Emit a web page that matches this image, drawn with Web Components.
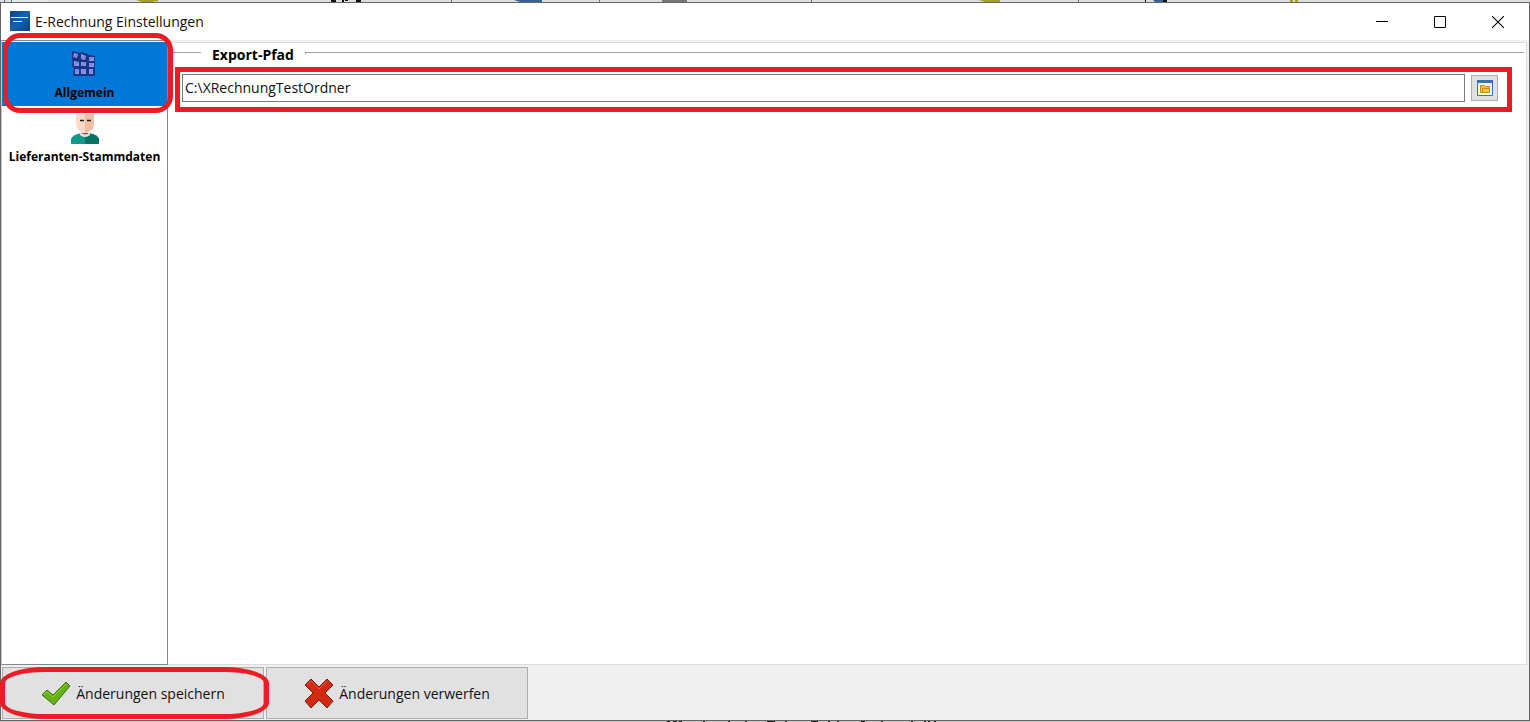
<!DOCTYPE html>
<html lang="de">
<head>
<meta charset="utf-8">
<title>E-Rechnung Einstellungen</title>
<style>
html,body{margin:0;height:100%;overflow:hidden}
body{font-family:"Open Sans","Noto Sans",sans-serif;font-size:14px;color:#111;background:#dedede}
</style>
</head>
<body>
<settings-app></settings-app>
<script>
function define(name, html){
  const t=document.createElement('template');t.innerHTML=html;
  customElements.define(name,class extends HTMLElement{
    constructor(){super();this.attachShadow({mode:'open'}).append(t.content.cloneNode(true));}
  });
}

define('title-bar',`<style>
:host{display:flex;height:37px;flex:none;background:#fff;align-items:center;padding:0 2px 0 8px}
.logo{width:21px;height:21px;flex:none}
h1{font-size:14px;line-height:20px;font-weight:400;margin:0 auto 0 5px;white-space:nowrap}
button{width:58px;height:36px;padding:0;border:0;background:none;display:grid;place-items:center}
</style>
<svg class="logo" viewBox="0 0 21 21"><defs><linearGradient id="g" x2="1" y2="1"><stop stop-color="#0c4184"/><stop offset=".5" stop-color="#1263b0"/><stop offset="1" stop-color="#0c3f82"/></linearGradient></defs><path fill="url(#g)" d="M1 0h20v20H1z"/><path d="M2 6.500h17M4 10.500h9" stroke="#d9ecff"/></svg>
<h1><slot></slot></h1>
<button aria-label="Minimieren"><svg width="12" height="12"><path d="M0 5.500h12" stroke="#000"/></svg></button>
<button aria-label="Maximieren"><svg width="12" height="12"><path d="M.5.5h11v11H.5z" fill="none" stroke="#000"/></svg></button>
<button aria-label="Schließen"><svg width="12" height="12"><path d="M0 0l12 12M12 0L0 12" stroke="#000" stroke-width="1.100"/></svg></button>
`);

define('nav-item',`<style>
:host{display:block;position:relative}
button{font:inherit;font-size:12px;font-weight:700;color:#000;width:100%;height:64px;border:0;padding:5px 0 0;background:#fff;display:flex;flex-direction:column;align-items:center;white-space:nowrap}
:host([active]) button{background:#0078d7}
span{line-height:20px;margin-top:2px}
::slotted(svg){width:32px;height:34px}
:host([active])::after{content:"";position:absolute;left:1px;right:-6px;top:-9px;bottom:-7px;border:5px solid #ed1c24;border-radius:17px;box-sizing:border-box;z-index:3;pointer-events:none}
</style><button><slot name="icon"></slot><span><slot></slot></span></button>`);

define('side-nav',`<style>
:host{display:block;box-sizing:border-box;width:167px;flex:none;background:#fff;border:1px solid #828790;border-left-color:#c4c4c4;padding-top:1px}
nav{display:block}
</style><nav><slot></slot></nav>`);

define('export-path',`<style>
:host{display:block}
.head{display:flex;height:20px;align-items:center}
.head::before{content:"";width:33px;height:1px;background:#a0a0a0;margin:0 11px 5px 0}
.head::after{content:"";flex:1;height:1px;border:1px solid #a0a0a0;border-width:1px 0 0 1px;margin:0 1px 4px 11px}
label{font-size:14px;line-height:20px;font-weight:700;color:#000}
.row{display:flex;gap:6px;border:5px solid #ed1c24;margin:2px 13px 0 7px;padding:1px 9px 5px 2px;height:29px;align-items:center}
input{flex:1;min-width:0;box-sizing:border-box;height:28px;border:1px solid #7a7a7a;padding:0 2px;font:inherit;color:#111;background:#fff;border-radius:0;outline:0}
button{width:27px;height:26px;box-sizing:border-box;border:1px solid #adadad;background:#e1e1e1;padding:0;display:grid;place-items:center}
</style>
<div class="head"><label for="path">Export-Pfad</label></div>
<div class="row"><input id="path" value="C:\\XRechnungTestOrdner"><button aria-label="Ordner wählen"><svg width="16" height="16"><path fill="#eef5fc" stroke="#3c6fb5" d="M.5.5h15v15H.5z"/><path fill="#3c6fb5" d="M0 0h16v3H0z"/><path fill="#f6c445" stroke="#c88a16" d="M3.500 12.500v-7h4l1 1h4v6zM5.500 12.500v-4h7"/></svg></button></div>`);

define('action-button',`<style>
:host{display:block;position:relative;width:262px;height:52px}
button{width:100%;height:100%;box-sizing:border-box;border:1px solid #adadad;background:#e1e1e1;font:inherit;color:#111;display:flex;align-items:center;justify-content:center;gap:5px;padding:0;white-space:nowrap}
::slotted(svg){width:30px;height:32px;flex:none}
:host([marked])::after{content:"";position:absolute;left:-2px;right:-5px;top:0;bottom:0;border:5px solid #ed1c24;border-radius:45px/16px;box-sizing:border-box;z-index:3;pointer-events:none}
</style><button><slot name="icon"></slot><span><slot></slot></span></button>`);

define('backdrop-strip',`<style>
:host{display:block;height:2px;flex:none;overflow:hidden;background:#dedede}
svg{display:block;width:100%;height:2px}
</style><svg viewBox="0 0 1530 2" preserveAspectRatio="none">
<path fill="#e8e8e8" d="M12 0h37v2H12z"/><path fill="#3489a0" d="M4 0h1v2H4zM11 0h1v2h-1z"/>
<path fill="#a8a020" d="M136 0h22v1l-6 1h-10zM979 0h21v2h-15zM1290 0h3v2h-3zM1295 0h3v2h-3z"/>
<path fill="#111" d="M331 0h5v2h-5zM342 0h2v2h-2zM345 0h3v1h-3zM356 0h5v2h-5zM1145 0h1v2h-1zM1163 0h4v2h-4z"/>
<path fill="#37628e" d="M514 0h28v2h-22zM1153 0h10v2h-8z"/>
<path fill="#777" d="M662 0h25v2h-25zM451 0h1v2h-1zM599 0h1v2h-1zM811 0h1v2h-1zM1078 0h1v2h-1z"/></svg>`);

define('status-strip',`<style>
:host{display:block;height:1px;flex:none;overflow:hidden;background:#c8c8c8}
svg{display:block;width:100%;height:1px}
</style><svg viewBox="0 0 1530 1" preserveAspectRatio="none"><path stroke="#222" d="M667 .5h3m3 0h4m2 0h3m21 0h2m23 0h2m15 0h2m20 0h8m10 0h2m24 0h7m10 0h2m7 0h2m22 0h4m16 0h2m28 0h2m11 0h2m2 0h2m4 0h2"/></svg>`);

define('settings-app',`<style>
:host{display:flex;flex-direction:column;height:100vh}
.window{flex:1;min-height:0;display:flex;flex-direction:column;border:1px solid #666;background:#f0f0f0}
main{flex:1;min-height:0;display:flex}
section{flex:1;min-width:0;margin:2px 2px 0 0;border:1px solid #dcdcdc;border-left:0;background:#fff;box-sizing:border-box}
export-path{padding:2px 1px 0 0}
footer{display:flex;gap:2px;height:52px;padding:2px 1px 1px;flex:none}
</style>
<backdrop-strip></backdrop-strip>
<div class="window">
<title-bar>E-Rechnung Einstellungen</title-bar>
<main>
<side-nav>
<nav-item active><svg slot="icon" viewBox="0 0 32 34"><path fill="#1a3385" d="M3 4l8 2 1-1 7 2 1 1 6 1v20H4l1-8-2-2 1-5-1-1z"/><g fill="#8c96e6"><path d="M5 6l4 1-1 4-4-1zM12 7l5 2-1 4-4-1zM20 10h5v4h-5zM5 14l5 1v4H5zM12 15h5v4h-5zM20 16h5v4h-5zM6 22h4v5H6zM12 22h5v5h-5zM20 22h4v5h-4z"/></g><path stroke="#6674d2" d="M5 10l3-3m4 5l4-3m4 4l4-3M6 18l3-3m4 4l3-4m5 4l3-3M7 26l2-4m4 4l3-4m5 4l2-3" fill="none"/></svg>Allgemein</nav-item>
<nav-item><svg slot="icon" viewBox="0 0 32 34"><path fill="#fbd9c5" d="M7 3h18v10q-1 8-9 9-8-1-9-9z"/><path fill="#f4bea5" d="M16 3h9v10q-1 8-9 9z"/><path d="M11 9.500h4m3 0h4" stroke="#222" stroke-width="1.500"/><path fill="#12988b" d="M2 33v-5q1-4 10-6h8q9 2 10 6v5z"/><path fill="#087265" d="M16 22h4q9 2 10 6v5H16z"/><path fill="#fbe0ce" d="M11 21q5 5 10 0v3q-5 4-10 0z"/></svg>Lieferanten-Stammdaten</nav-item>
</side-nav>
<section><export-path></export-path></section>
</main>
<footer>
<action-button marked><svg slot="icon" viewBox="0 0 30 32"><path fill="#66b016" stroke="#3d7510" d="M1 18l5-5 6 5L25 5l4 4-16 19z"/><path d="M3 18l3-3 6 5L25 7" fill="none" stroke="#8bcf32"/></svg>Änderungen speichern</action-button>
<action-button><svg slot="icon" viewBox="0 0 30 32"><path fill="#d22a10" stroke="#7d1c0c" d="M7 2l8 8 8-8 6 6-8 8 8 8-6 7-8-8-8 8-6-7 8-8-8-8z"/><path d="M3 8l4-4 8 8 8-8" fill="none" stroke="#f0553b"/></svg>Änderungen verwerfen</action-button>
</footer>
</div>
<status-strip></status-strip>`);
</script>
</body>
</html>
